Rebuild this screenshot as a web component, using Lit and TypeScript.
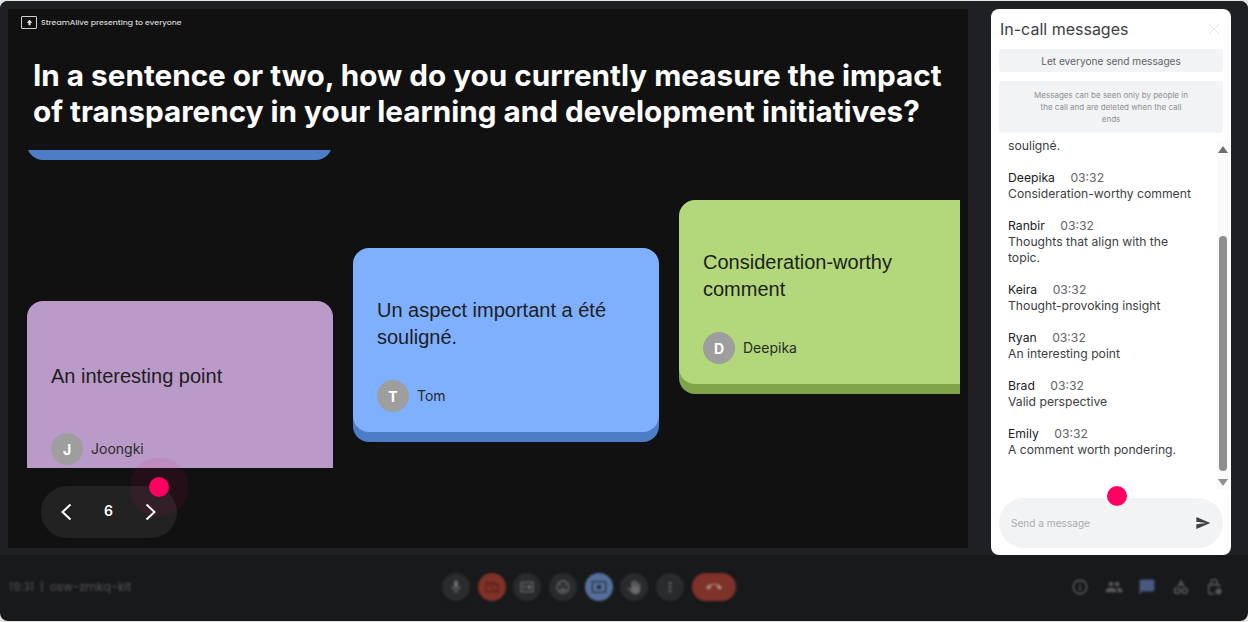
import { LitElement, css, html, svg } from 'lit';
import { customElement } from 'lit/decorators.js';

const messages = [
  { name: 'Deepika', text: 'Consideration-worthy comment' },
  { name: 'Ranbir', text: 'Thoughts that align with the topic.' },
  { name: 'Keira', text: 'Thought-provoking insight' },
  { name: 'Ryan', text: 'An interesting point' },
  { name: 'Brad', text: 'Valid perspective' },
  { name: 'Emily', text: 'A comment worth pondering.' },
];

const icons: Record<string, string> = {
  mic: 'M12 14c1.66 0 3-1.34 3-3V5c0-1.66-1.34-3-3-3S9 3.34 9 5v6c0 1.66 1.34 3 3 3zm5.3-3c0 3-2.54 5.1-5.3 5.1S6.7 14 6.7 11H5c0 3.41 2.72 6.23 6 6.72V21h2v-3.28c3.28-.49 6-3.31 6-6.72h-1.7z',
  camOff: 'M3.3 2.3 2 3.6 4.4 6H4c-1.1 0-2 .9-2 2v10c0 1.1.9 2 2 2h14.4l2 2 1.3-1.3L3.3 2.3zM4 18V8h2.4l10 10H4zM22 6h-6.2L14 4H9.6L8 5.6l1.4 1.4h3.7l1.8 2H20v8.6l2 2V8c0-1.1-.9-2-2-2z',
  captions: 'M20 4H4c-1.1 0-2 .9-2 2v12c0 1.1.9 2 2 2h16c1.1 0 2-.9 2-2V6c0-1.1-.9-2-2-2zm0 14H4V6h16v12zM6 9h5v2H6V9zm0 4h5v2H6v-2zm7-4h5v6h-5V9z',
  emoji: 'M12 2a10 10 0 1 0 0 20 10 10 0 0 0 0-20zm0 18a8 8 0 1 1 0-16 8 8 0 0 1 0 16zM8.5 11a1.5 1.5 0 1 0 0-3 1.5 1.5 0 0 0 0 3zm7 0a1.5 1.5 0 1 0 0-3 1.5 1.5 0 0 0 0 3zM12 14c-2.300 0-4.300 1.500-5.100 3.500h10.200C16.300 15.500 14.300 14 12 14z',
  present: 'M21 3H3c-1.1 0-2 .9-2 2v14c0 1.100.9 2 2 2h18c1.100 0 2-.9 2-2V5c0-1.100-.9-2-2-2zm0 16H3V5h18v14zM9 9h6v6H9V9z',
  hand: 'M8 4.500a1.300 1.300 0 0 1 2.600 0V11h1V3.300a1.300 1.300 0 0 1 2.600 0V11h1V5a1.300 1.300 0 0 1 2.600 0v8h1V8a1.300 1.300 0 0 1 2.600 0v8c0 3.900-3.100 7-7 7-3 0-4.700-1.200-6.200-3.400L3 14.500c-.6-.9.600-2.100 1.600-1.300L8 16V4.500z',
  more: 'M12 8c1.100 0 2-.9 2-2s-.9-2-2-2-2 .9-2 2 .9 2 2 2zm0 2c-1.100 0-2 .9-2 2s.9 2 2 2 2-.9 2-2-.9-2-2-2zm0 6c-1.100 0-2 .9-2 2s.9 2 2 2 2-.9 2-2-.9-2-2-2z',
  callEnd: 'M12 9c-1.600 0-3.150.25-4.600.72v3.100c0 .39-.23.74-.56.900-.98.49-1.870 1.120-2.660 1.850-.18.18-.43.28-.7.28-.28 0-.53-.11-.71-.29L.29 13.080c-.18-.17-.29-.42-.29-.7 0-.28.11-.53.29-.71C3.340 8.780 7.460 7 12 7s8.660 1.780 11.710 4.670c.18.18.29.43.29.71 0 .28-.11.53-.29.71l-2.480 2.480c-.18.18-.43.29-.71.29-.27 0-.52-.11-.7-.28-.79-.74-1.690-1.360-2.670-1.850-.33-.16-.56-.5-.56-.9v-3.100C15.150 9.250 13.600 9 12 9z',
  info: 'M11 7h2v2h-2V7zm0 4h2v6h-2v-6zm1-9a10 10 0 1 0 0 20 10 10 0 0 0 0-20zm0 18a8 8 0 1 1 0-16 8 8 0 0 1 0 16z',
  people: 'M16 11c1.660 0 3-1.340 3-3s-1.340-3-3-3-3 1.340-3 3 1.340 3 3 3zm-8 0c1.660 0 3-1.340 3-3S9.660 5 8 5 5 6.340 5 8s1.340 3 3 3zm0 2c-2.330 0-7 1.170-7 3.500V19h14v-2.500C15 14.170 10.330 13 8 13zm8 0c-.29 0-.62.020-.97.050 1.160.84 1.970 1.970 1.970 3.450V19h6v-2.500c0-2.330-4.670-3.500-7-3.500z',
  chat: 'M20 2H4c-1.100 0-2 .9-2 2v18l4-4h14c1.100 0 2-.9 2-2V4c0-1.100-.9-2-2-2z',
  shapes: 'M12 2 7 10.500h10L12 2zm0 3.900 1.500 2.600h-3L12 5.900zM7 12.500a4.500 4.500 0 1 0 0 9 4.500 4.500 0 0 0 0-9zm0 2a2.500 2.500 0 1 1 0 5 2.500 2.500 0 0 1 0-5zm10-2a4.500 4.500 0 1 0 0 9 4.500 4.500 0 0 0 0-9zm0 2a2.500 2.500 0 1 1 0 5 2.500 2.500 0 0 1 0-5z',
  lock: 'M18 8h-1V6A5 5 0 0 0 7 6v2H6c-1.100 0-2 .9-2 2v10c0 1.100.9 2 2 2h6.500a6 6 0 0 1-.5-2H6V10h12v2h2v-2c0-1.100-.9-2-2-2zM9 6a3 3 0 0 1 6 0v2H9V6zm9 8a4 4 0 1 0 0 8 4 4 0 0 0 0-8z',
  send: 'M2.010 21 23 12 2.010 3 2 10l15 2-15 2z',
};

const icon = (name: string, size = 18) => html`<svg width=${size} height=${size} viewBox="0 0 24 24" fill="currentColor">${svg`<path d=${icons[name]}></path>`}</svg>`;

const card = (cls: string, text: string, name: string) => html`
  <div class="card ${cls}">
    <div class="card-text">${text}</div>
    <div class="author">
      <span class="avatar">${name[0]}</span>
      <span class="author-name">${name}</span>
    </div>
  </div>
`;

@customElement('app-root')
export class AppRoot extends LitElement {
  static styles = css`
    :host {
      display: block;
      width: 1248px;
      height: 622px;
      background: #e3e3e3;
      overflow: hidden;
      font-family: Inter, "Liberation Sans", sans-serif;
    }
    .frame {
      position: relative;
      height: 620px;
      margin-top: 1px;
      background: #18191b;
      border-radius: 8px;
      overflow: hidden;
      display: flex;
      flex-direction: column;
    }
    .main {
      height: 554px;
      padding: 8px 17px 0 8px;
      box-sizing: border-box;
      background: #1f2024;
      display: flex;
      justify-content: space-between;
      flex: none;
    }
    .stage {
      width: 960px;
      height: 539px;
      background: #111112;
      color: #fff;
      display: flex;
      flex-direction: column;
    }
    .presenting {
      display: flex;
      align-items: center;
      gap: 4px;
      height: 13px;
      margin: 7px 0 0 13px;
      font-family: Poppins, Inter, sans-serif;
      font-size: 7.800px;
      font-weight: 500;
      color: #d8d8d8;
    }
    .screen-icon {
      width: 14px;
      height: 11px;
      border: 1px solid #cfcfcf;
      border-radius: 1px;
      display: flex;
      align-items: center;
      justify-content: center;
    }
    .screen-icon svg { display: block; }
    h1 {
      width: 925px;
      margin: 28px 0 0 25px;
      font-size: 29.700px;
      line-height: 36px;
      font-weight: 700;
      color: #fff;
    }
    .canvas {
      position: relative;
      width: 952px;
      height: 318px;
      margin-top: 21px;
      overflow: hidden;
      flex: none;
    }
    .card {
      position: absolute;
      width: 306px;
      height: 184px;
      box-sizing: border-box;
      border-radius: 16px;
      padding: 48px 24px 0;
      color: #1e1e1e;
      box-shadow: 0 10px 0 var(--edge);
    }
    .card.top { left: 19px; top: -184px; background: #7fafff; --edge: #4e7dc8; width: 305px; }
    .card.purple { left: 19px; top: 151px; background: #b99ac8; --edge: #8a6f98; }
    .card.blue { left: 345px; top: 98px; background: #7fafff; --edge: #4e7dc8; }
    .card.green { left: 671px; top: 50px; background: #b2d87b; --edge: #7fa548; }
    .card-text {
      display: flex;
      align-items: center;
      height: 55px;
      font-family: "Liberation Sans", Arial, sans-serif;
      font-size: 20px;
      line-height: 27px;
    }
    .author {
      display: flex;
      align-items: center;
      gap: 8px;
      margin-top: 29px;
      font-size: 14px;
    }
    .author-name { padding-bottom: 2px; color: #2a2a2a; }
    .avatar {
      width: 32px;
      height: 32px;
      border-radius: 50%;
      background: #9e9e9e;
      color: #fff;
      font-size: 14px;
      font-weight: 700;
      display: flex;
      align-items: center;
      justify-content: center;
    }
    .pager {
      display: flex;
      align-items: center;
      justify-content: space-between;
      width: 136px;
      height: 52px;
      box-sizing: border-box;
      margin: 18px 0 0 33px;
      padding: 0 15px 0 14px;
      border-radius: 26px;
      background: #222222;
      font-size: 14px;
      font-weight: 600;
    }
    .pager span { padding-bottom: 3px; }
    .pager svg { display: block; }
    .panel {
      position: relative;
      width: 240px;
      height: 546px;
      background: #fff;
      border-radius: 8px;
      box-sizing: border-box;
      padding: 0 8px;
      display: flex;
      flex-direction: column;
      color: #3c4043;
    }
    .panel-head {
      display: flex;
      align-items: center;
      justify-content: space-between;
      height: 39px;
      margin-bottom: 1px;
      padding-left: 1px;
      font-size: 16px;
      color: #3c4043;
      flex: none;
    }
    .close { width: 10px; height: 10px; margin-right: 4px; color: #e4e5e7; }
    .allow {
      height: 23px;
      border-radius: 3px;
      background: #f1f3f4;
      font-size: 10.100px;
      color: #5f6368;
      display: flex;
      align-items: center;
      justify-content: center;
      flex: none;
    }
    .notice {
      margin-top: 9px;
      height: 52px;
      box-sizing: border-box;
      padding: 8px 33px;
      border-radius: 3px;
      background: #f1f3f4;
      font-size: 8px;
      line-height: 12px;
      color: #8d9094;
      text-align: center;
      flex: none;
    }
    .list-wrap {
      display: flex;
      height: 356px;
      margin-right: -6px;
      flex: none;
    }
    .list {
      flex: 1;
      padding: 5px 16px 0 9px;
      overflow: hidden;
      font-size: 12.200px;
      line-height: 16px;
    }
    .msg { margin-top: 16px; }
    .msg b { font-weight: 400; color: #202124; margin-right: 12px; }
    .msg time { color: #5f6368; }
    .scroll {
      position: relative;
      width: 12px;
      margin-top: 8px;
      background: #fafafa;
      flex: none;
    }
    .thumb {
      position: absolute;
      left: 2px;
      top: 95px;
      width: 8px;
      height: 235px;
      border-radius: 4px;
      background: #8f8f8f;
    }
    .arrow {
      position: absolute;
      left: 1px;
      width: 0;
      height: 0;
      border-left: 5px solid transparent;
      border-right: 5px solid transparent;
    }
    .arrow.up { top: 5px; border-bottom: 7px solid #6e6e6e; }
    .arrow.down { bottom: 3px; border-top: 7px solid #8f8f8f; }
    .compose {
      height: 50px;
      margin-top: 9px;
      border-radius: 25px;
      background: #f1f3f4;
      display: flex;
      align-items: center;
      justify-content: space-between;
      padding: 0 12px;
      font-size: 10.100px;
      color: #a9adb1;
      flex: none;
    }
    .compose svg { color: #3c4043; display: block; }
    .bar {
      flex: 1;
      display: flex;
      align-items: center;
      filter: blur(1.300px);
      padding-bottom: 2px;
      box-sizing: border-box;
      color: #666;
    }
    .clock {
      display: flex;
      gap: 6px;
      align-items: baseline;
      width: 442px;
      padding-left: 9px;
      box-sizing: border-box;
      font-family: Poppins, Inter, sans-serif;
      font-size: 11.500px;
      font-weight: 500;
      color: #4a4a4c;
      flex: none;
    }
    .controls { display: flex; gap: 7.700px; align-items: center; }
    .ctl {
      width: 28px;
      height: 28px;
      border-radius: 50%;
      background: #2a2b2e;
      display: flex;
      align-items: center;
      justify-content: center;
      color: #6b6b6d;
    }
    .ctl.red { background: #7f3228; color: #5e2018; }
    .ctl.active { background: #55709e; color: #2a2f3a; }
    .ctl.end { width: 44px; border-radius: 14px; background: #7f3228; color: #a88; }
    .side { display: flex; gap: 15.500px; margin-left: auto; margin-right: 25px; color: #5c5c5e; }
    .side .on { color: #46597f; }
    .side span { display: flex; }
    .dot {
      position: absolute;
      width: 20px;
      height: 20px;
      border-radius: 50%;
      background: #ff0062;
    }
    .dot.stage-dot { left: 149px; top: 476px; box-shadow: 0 0 0 19px rgba(255, 0, 98, .08); }
    .dot.chat-dot { left: 1107px; top: 485px; }
  `;

  render() {
    return html`
      <div class="frame">
        <div class="main">
          <section class="stage">
            <div class="presenting">
              <span class="screen-icon"><svg width="7" height="7" viewBox="0 0 10 10" fill="#e8e8e8"><path d="M5 1 9 5.500H6.500V9h-3V5.500H1z"></path></svg></span>
              <span>StreamAlive presenting to everyone</span>
            </div>
            <h1>In a sentence or two, how do you currently measure the impact of transparency in your learning and development initiatives?</h1>
            <div class="canvas">
              <div class="card top"></div>
              ${card('purple', 'An interesting point', 'Joongki')}
              ${card('blue', 'Un aspect important a été souligné.', 'Tom')}
              ${card('green', 'Consideration-worthy comment', 'Deepika')}
            </div>
            <div class="pager">
              <svg width="24" height="24" viewBox="0 0 24 24" fill="none" stroke="#fff" stroke-width="2"><path d="M15.500 4.500 7.500 12l8 7.500"></path></svg>
              <span>6</span>
              <svg width="24" height="24" viewBox="0 0 24 24" fill="none" stroke="#fff" stroke-width="2"><path d="m8.500 4.500 8 7.500-8 7.500"></path></svg>
            </div>
          </section>
          <aside class="panel">
            <div class="panel-head">
              <span>In-call messages</span>
              <svg class="close" viewBox="0 0 10 10" stroke="currentColor" stroke-width="1"><path d="m0 0 10 10M10 0 0 10"></path></svg>
            </div>
            <div class="allow">Let everyone send messages</div>
            <div class="notice">Messages can be seen only by people in the call and are deleted when the call ends</div>
            <div class="list-wrap">
              <div class="list">
                <div>souligné.</div>
                ${messages.map(m => html`
                  <div class="msg">
                    <div><b>${m.name}</b> <time>03:32</time></div>
                    <div>${m.text}</div>
                  </div>
                `)}
              </div>
              <div class="scroll">
                <span class="arrow up"></span>
                <span class="thumb"></span>
                <span class="arrow down"></span>
              </div>
            </div>
            <div class="compose">
              <span>Send a message</span>
              ${icon('send', 16)}
            </div>
          </aside>
        </div>
        <footer class="bar">
          <div class="clock">
            <span>19:31</span>
            <span>|</span>
            <span>osw-zmkq-kit</span>
          </div>
          <div class="controls">
            <span class="ctl">${icon('mic', 16)}</span>
            <span class="ctl red">${icon('camOff', 16)}</span>
            <span class="ctl">${icon('captions', 16)}</span>
            <span class="ctl">${icon('emoji', 16)}</span>
            <span class="ctl active">${icon('present', 16)}</span>
            <span class="ctl">${icon('hand', 16)}</span>
            <span class="ctl">${icon('more', 16)}</span>
            <span class="ctl end">${icon('callEnd', 16)}</span>
          </div>
          <div class="side">
            <span>${icon('info')}</span>
            <span>${icon('people')}</span>
            <span class="on">${icon('chat')}</span>
            <span>${icon('shapes')}</span>
            <span>${icon('lock')}</span>
          </div>
        </footer>
        <span class="dot stage-dot"></span>
        <span class="dot chat-dot"></span>
      </div>
    `;
  }
}
